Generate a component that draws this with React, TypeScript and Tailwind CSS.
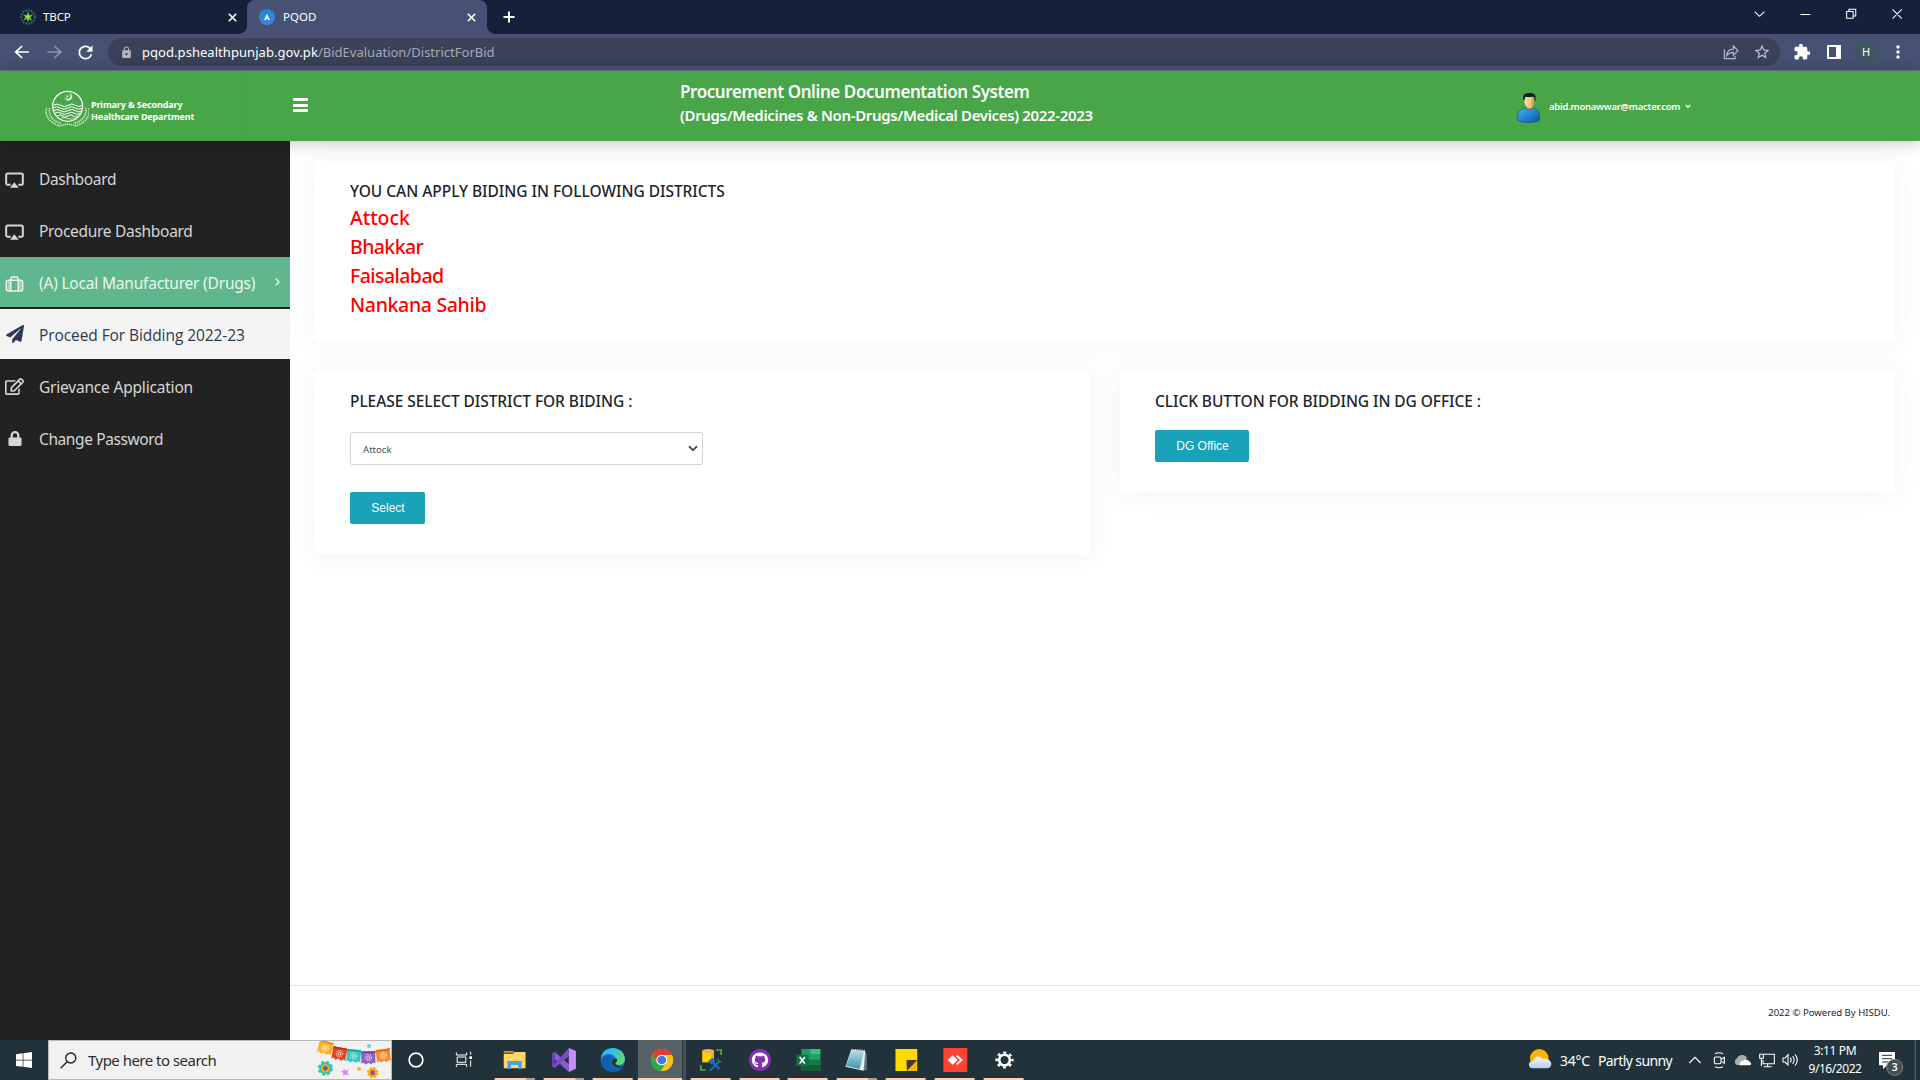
import React from "react";
import type { ReactNode } from "react";
import { FaLock, FaPaperPlane, FaRegEdit, FaGithub } from "react-icons/fa";
import { MdExtension, MdStarBorder, MdLock, MdRefresh } from "react-icons/md";

/* ---------- Browser ---------- */

function TabStrip() {
  return (
    <div className="flex h-[34px] bg-[#16203b] text-[11.5px] text-white">
      <div className="flex w-[247px] items-center pl-5 pr-[10px]">
        <svg className="h-4 w-4" viewBox="0 0 16 16">
          <circle cx="8" cy="8" r="6.8" fill="none" stroke="#3f7f5d" strokeWidth="1.8" strokeDasharray="1.6 1.3" />
          <path d="M8 2l1.3 4 4-.6-3 2.8 2.2 3.8-3.6-1.8L8 14l-1-4-3.600 1.500 2-3.500-2.600-2.600 4 .5z" fill="#55b83c" />
          <path d="M8 4l.8 3 2.500.5-2.300 1.200L8 12l-.8-3-2.700-1.200 2.700-.8z" fill="#b5d334" />
        </svg>
        <span className="ml-[7px] flex-1 tracking-[-0.1px]">TBCP</span>
        <CloseMark />
      </div>
      <div className="relative flex h-full w-[240px] items-center rounded-t-lg bg-[#465173] pl-3 pr-[11px]">
        <div className="absolute -left-2 bottom-0 h-2 w-2 bg-[radial-gradient(circle_at_0_0,#16203b_7.5px,#465173_8px)]" />
        <div className="absolute -right-2 bottom-0 h-2 w-2 bg-[radial-gradient(circle_at_100%_0,#16203b_7.5px,#465173_8px)]" />
        <svg className="h-4 w-4" viewBox="0 0 15 15">
          <defs>
            <linearGradient id="favicon" x1="0" y1="0" x2="0" y2="1">
              <stop offset="0" stopColor="#1a8bd8" />
              <stop offset="1" stopColor="#4a80dc" />
            </linearGradient>
          </defs>
          <circle cx="7.500" cy="7.500" r="7.500" fill="url(#favicon)" />
          <path d="M4.800 10.300L7.500 4.500l2.700 5.800H8.700L7.500 8.600l-1.200 1.700z" fill="#fff" />
        </svg>
        <span className="ml-2 flex-1">PQOD</span>
        <CloseMark />
      </div>
      <svg className="ml-4 mt-[11px] h-3 w-3" viewBox="0 0 12 12">
        <path d="M6 .5v11M.5 6h11" stroke="#fff" strokeWidth="2" />
      </svg>
      <svg className="ml-auto h-[34px] w-[178px]" viewBox="1050 0 518 102" preserveAspectRatio="none" fill="none" stroke="#fff" strokeWidth="3">
        <path d="M1087 35l14 14 14-14M1220 43.500h29M1354.500 34.500h19v20h-19zM1361 34v-6h20v20h-7M1488 28l27 28M1515 28l-27 28" />
      </svg>
    </div>
  );
}

function CloseMark() {
  return (
    <svg className="h-[9px] w-[9px]" viewBox="0 0 9 9">
      <path d="M.8.8l7.400 7.400M8.200.8L.8 8.200" stroke="#fff" strokeWidth="1.600" />
    </svg>
  );
}

function AddressBar() {
  return (
    <div className="flex h-[37px] items-center border-b border-[#6f7299] bg-[#465173] pr-[10px]">
      <svg className="h-9 w-[75px]" viewBox="0 102 210 108" preserveAspectRatio="none" fill="none" strokeWidth="5">
        <path d="M81 156H46M62 138l-18 18 18 18" stroke="#fff" />
        <path d="M133 156h35M152 138l18 18-18 18" stroke="#8d95ac" />
      </svg>
      <MdRefresh className="mr-3 h-[21px] w-[21px] text-white" />
      <div className="flex h-7 flex-1 items-center rounded-full bg-[#3a4158] pl-[12px] pr-[9px]">
        <MdLock className="h-[13px] w-[13px] text-[#b4b7c0]" />
        <span className="ml-[9px] pt-px text-[13px]">
          <span className="tracking-[0.05px] text-white">pqod.pshealthpunjab.gov.pk</span>
          <span className="tracking-[0.01px] text-[#a6aab7]">/BidEvaluation/DistrictForBid</span>
        </span>
        <svg className="ml-auto h-4 w-4" viewBox="994 132 48 48" fill="none" stroke="#babdc6" strokeWidth="3.500">
          <path d="M998 148v28h32v-8M1005 167c1-12 9-20 20-20v-9l14 14-14 14v-9c-9 0-15 3-20 10z" />
        </svg>
        <MdStarBorder className="ml-[14px] h-[18px] w-[18px] text-[#c0c3cc]" />
      </div>
      <MdExtension className="ml-[13px] h-[18px] w-[18px] text-white" />
      <svg className="ml-4 h-[14px] w-[14px]" viewBox="0 0 14 14">
        <path d="M0 0h14v14H0zM2 2v10h7V2z" fill="#fff" fillRule="evenodd" />
      </svg>
      <span className="ml-[14px] flex h-[22px] w-[22px] items-center justify-center rounded-full bg-[#41575f] text-[11px] text-white">H</span>
      <svg className="ml-[17px] h-4 w-4" viewBox="0 0 16 16" fill="#fff">
        <circle cx="4" cy="3" r="1.700" />
        <circle cx="4" cy="8" r="1.700" />
        <circle cx="4" cy="13" r="1.700" />
      </svg>
    </div>
  );
}

/* ---------- Site header ---------- */

function Emblem() {
  return (
    <svg className="h-[38px] w-[44px]" viewBox="44 30 132 114" fill="none" stroke="#fff">
      <g stroke="#cfe8ce" strokeWidth="5" strokeDasharray="4 2.500">
        <path d="M49 84c-6 18 4 42 36 52" />
        <path d="M58 84c-5 18 8 40 34 46" />
        <path d="M175 84c6 18-4 42-36 52" />
        <path d="M166 84c5 18-8 40-34 46" />
        <path d="M84 139c18-8 38-8 56 0" />
      </g>
      <circle cx="112" cy="79" r="45" fill="#48a648" strokeWidth="3.500" />
      <path d="M118 40a11 11 0 1 1-15 13 10 10 0 1 0 15-13z" fill="#fff" strokeWidth="1" />
      <path d="M110 44l2 3 3-1-2 3 2 3-4-1-2 2v-4l-3-1 3-1z" fill="#fff" stroke="none" />
      <path
        d="M69 76q11-8 22 0t22 0 22 0 20 0M68 84q11-8 22 0t22 0 22 0 22 0M71 92q10-8 20 0t22 0 22 0 19 0M74 100q10-7 19 0t20 0 20 0 16 0M81 108q8-7 16 0t16 0 16 0 13 0"
        strokeWidth="3"
      />
      <path d="M92 115q10-5 20 0t20 0" strokeWidth="2" />
    </svg>
  );
}

function Avatar() {
  return (
    <svg className="h-[32px] w-[23px]" viewBox="397 276 66 96" preserveAspectRatio="none">
      <defs>
        <linearGradient id="shirt" x1="0" y1="0" x2="1" y2="1">
          <stop offset="0" stopColor="#4fb3ea" />
          <stop offset=".6" stopColor="#1b7cd0" />
          <stop offset="1" stopColor="#0d5296" />
        </linearGradient>
        <linearGradient id="face" x1="0" y1="0" x2="1" y2="0">
          <stop offset="0" stopColor="#f8e2a0" />
          <stop offset=".6" stopColor="#e9c878" />
          <stop offset="1" stopColor="#a98443" />
        </linearGradient>
      </defs>
      <path d="M424 310h17v20l-8 6-9-6z" fill="#b88c48" />
      <path d="M399 361c-3-22 6-34 22-37 8 8 16 8 23 0 14 4 20 17 17 37-14 9-48 9-62 0z" fill="url(#shirt)" stroke="#1c4f6c" strokeWidth="2" />
      <path d="M417 292c4-8 28-8 32 0 1 16-5 33-16 33s-17-17-16-33z" fill="url(#face)" />
      <path d="M417 305c-6-20 0-26 17-26 15 0 19 8 15 27l-3-15c-8-2-18 2-25-1z" fill="#0c1722" />
    </svg>
  );
}

function SiteHeader() {
  return (
    <header className="relative z-10 flex h-[70px] bg-[#48a648] font-semibold text-white shadow-[0_1px_15px_rgba(0,0,0,0.25)]">
      <div className="flex w-[246px] items-start border-r-[5px] border-[#48a448] pl-[45px]">
        <div className="mt-[19px]">
          <Emblem />
        </div>
        <div className="ml-[2px] mt-[28px] whitespace-nowrap text-[9px] font-bold leading-3">
          <div className="tracking-[-0.12px]">Primary &amp; Secondary</div>
          <div className="tracking-[-0.16px]">Healthcare Department</div>
        </div>
      </div>
      <div className="ml-[47px] mt-[27px] flex h-[14px] w-[15px] flex-col justify-between">
        <i className="h-[3px] rounded-[1px] bg-white" />
        <i className="h-[3px] rounded-[1px] bg-white" />
        <i className="h-[3px] rounded-[1px] bg-white" />
      </div>
      <div className="ml-[372px] mt-[8px] w-[837px] whitespace-nowrap">
        <div className="text-[17px] leading-[26px] tracking-[-0.42px]">Procurement Online Documentation System</div>
        <div className="text-[15px] leading-[21px] tracking-[-0.34px]">(Drugs/Medicines &amp; Non-Drugs/Medical Devices) 2022-2023</div>
      </div>
      <div className="mt-[21px] flex h-8">
        <Avatar />
        <span className="ml-[9px] mt-[7px] text-[9.5px] leading-4 tracking-[-0.25px]">abid.monawwar@macter.com</span>
        <svg className="ml-[5px] mt-[12px] h-[5px] w-[6px]" viewBox="0 0 6 5">
          <path d="M.7 1l2.300 2.300L5.300 1" fill="none" stroke="#fff" strokeWidth="1.300" />
        </svg>
      </div>
    </header>
  );
}

/* ---------- Sidebar ---------- */

function AirplayIcon() {
  return (
    <svg className="h-4 w-[19px] translate-y-[1px]" viewBox="0 0 57 48">
      <path d="M17 38H8a4.500 4.500 0 0 1-4.500-4.500V9A4.500 4.500 0 0 1 8 4.500h41A4.500 4.500 0 0 1 53.500 9v24.500A4.500 4.500 0 0 1 49 38h-9" fill="none" stroke="currentColor" strokeWidth="6" />
      <path d="M28 31l13 16H15z" fill="currentColor" />
    </svg>
  );
}

function SuitcaseIcon() {
  return (
    <svg className="h-4 w-[19px] translate-y-[2px]" viewBox="0 0 57 48" fill="none" stroke="currentColor">
      <rect x="4" y="13" width="49" height="32" rx="6" strokeWidth="4.500" />
      <path d="M18 14V7a4 4 0 0 1 4-4h13a4 4 0 0 1 4 4v7M17 13v32M40 13v32" strokeWidth="4.500" />
      <path d="M11 15v28M46 15v28" strokeWidth="6" opacity=".55" />
    </svg>
  );
}

function MenuRow({ icon, children, className = "" }: { icon: ReactNode; children: ReactNode; className?: string }) {
  return (
    <div className={`flex h-[52px] items-center whitespace-nowrap pl-[5px] text-[15.5px] ${className}`}>
      <span className="-ml-[0.5px] flex w-5 justify-center">{icon}</span>
      <span className="ml-[14.5px] flex flex-1 items-center leading-6">{children}</span>
    </div>
  );
}

function Sidebar() {
  return (
    <nav className="w-[290px] shrink-0 bg-[#222222] pt-3 text-[#d6d6d6]">
      <MenuRow icon={<AirplayIcon />}>
        <span className="tracking-[-0.35px]">Dashboard</span>
      </MenuRow>
      <MenuRow icon={<AirplayIcon />}>
        <span className="tracking-[-0.3px]">Procedure Dashboard</span>
      </MenuRow>
      <MenuRow icon={<SuitcaseIcon />} className="border-b-2 border-[#222] bg-[#61b78c] text-[#e9f6ef]">
        <span className="relative top-px tracking-[-0.2px]">(A) Local Manufacturer (Drugs)</span>
        <svg className="ml-auto mr-[10px] h-2 w-[5px]" viewBox="0 0 5 8">
          <path d="M.8.800L4 4 .8 7.200" fill="none" stroke="currentColor" strokeWidth="1.400" />
        </svg>
      </MenuRow>
      <MenuRow icon={<FaPaperPlane className="h-[18px] w-[18px]" />} className="border-b-2 border-[#222] bg-[#f4f4f4] text-[#2d3a4f]">
        <span className="relative top-px font-['Open_Sans'] tracking-[-0.08px]">Proceed For Bidding 2022-23</span>
      </MenuRow>
      <MenuRow icon={<FaRegEdit className="h-[17px] w-[19px] -translate-y-px" />}>
        <span className="tracking-[-0.2px]">Grievance Application</span>
      </MenuRow>
      <MenuRow icon={<FaLock className="h-[15px] w-[14px] -translate-y-px" />}>
        <span className="tracking-[-0.4px]">Change Password</span>
      </MenuRow>
    </nav>
  );
}

/* ---------- Page content ---------- */

function Card({ children, className = "" }: { children: ReactNode; className?: string }) {
  return <section className={`rounded bg-white px-[35px] shadow-[0_0_28px_rgba(82,63,105,0.07)] ${className}`}>{children}</section>;
}

function Heading({ children }: { children: ReactNode }) {
  return <h2 className="whitespace-nowrap text-[15.5px] font-medium leading-5 text-[#212529]">{children}</h2>;
}

function TealButton({ children, className }: { children: ReactNode; className: string }) {
  return (
    <button className={`flex h-8 items-center justify-center rounded-[2px] bg-[#19a2b8] font-['Liberation_Sans'] text-[12px] text-white ${className}`}>
      {children}
    </button>
  );
}

function Content() {
  return (
    <main className="flex flex-1 flex-col bg-white">
      <div className="flex-1 px-[25px] pt-5">
        <Card className="h-[180px] pt-5">
          <Heading>
            <span className="tracking-[-0.03px]">YOU CAN APPLY BIDING IN FOLLOWING DISTRICTS</span>
          </Heading>
          <div className="mt-[2px] text-[19.5px] font-medium leading-[29px] text-[#ff0000]">
            <div className="tracking-[-0.05px]">Attock</div>
            <div className="tracking-[-0.6px]">Bhakkar</div>
            <div className="tracking-[-0.56px]">Faisalabad</div>
            <div className="tracking-[-0.33px]">Nankana Sahib</div>
          </div>
        </Card>
        <div className="mt-[30px] grid grid-cols-2 items-start gap-[30px]">
          <Card className="h-[183px] pt-5">
            <Heading>
              <span className="tracking-[-0.06px]">PLEASE SELECT DISTRICT FOR BIDING :</span>
            </Heading>
            <div className="mt-[21px] flex h-[33px] w-[353px] items-center justify-between rounded-[2px] border border-[#ced4da] pl-3 pr-1 text-[9.6px] text-[#495057]">
              <span className="relative top-[2px]">Attock</span>
              <svg className="h-[7px] w-[10px]" viewBox="0 0 10 7">
                <path d="M1 1.300l4 3.900 4-3.900" fill="none" stroke="#495057" strokeWidth="1.900" />
              </svg>
            </div>
            <TealButton className="mt-[27px] w-[75px] pl-px">Select</TealButton>
          </Card>
          <Card className="h-[121px] pt-5">
            <Heading>
              <span className="tracking-[-0.07px]">CLICK BUTTON FOR BIDDING IN DG OFFICE :</span>
            </Heading>
            <TealButton className="mt-[19px] w-[94px] pl-px">DG Office</TealButton>
          </Card>
        </div>
      </div>
      <footer className="flex h-[55px] items-center justify-end border-t border-[#e6e6e8] pr-[30px] text-[9.6px] tracking-[-0.03px] text-[#212529]">
        2022 © Powered By HISDU.
      </footer>
    </main>
  );
}

/* ---------- Taskbar ---------- */

function Bunting() {
  const flags: [number, number, string, string, number][] = [
    [976, 53, "#ffb31a", "#f08c00", 15],
    [1018, 71, "#e4441f", "#c42c10", 10],
    [1061, 78, "#2fc9bd", "#1aa79e", 5],
    [1105, 83, "#8d5fc4", "#6f43a8", -1],
    [1150, 77, "#ff8a1f", "#ea6a00", -7],
  ];
  return (
    <svg className="h-[38px] w-[74px]" viewBox="951 33 222 114">
      <path d="M957 38q100 55 213 17" fill="none" stroke="#555" strokeWidth="2" />
      {flags.map(([x, y, c, d, r]) => (
        <g key={x} transform={`translate(${x} ${y}) rotate(${r})`}>
          <path d="M-21-19h42v37l-6-3-7 5-8-5-8 5-7-5-6 3z" fill={c} />
          <path d="M-21-19h42v5h-42z" fill={d} />
          <circle r="9.500" fill="none" stroke="#fff" strokeWidth="3" strokeDasharray="3 2.500" opacity=".8" />
          <circle r="4.500" fill="none" stroke="#fff" strokeWidth="2.500" opacity=".85" />
        </g>
      ))}
      <circle cx="976" cy="115" r="19" fill="none" stroke="#2cc4b8" strokeWidth="7" strokeDasharray="9 5.900" />
      <circle cx="976" cy="115" r="18" fill="#2cc4b8" />
      <circle cx="976" cy="115" r="12.500" fill="#ffb000" />
      <circle cx="976" cy="115" r="7" fill="#7a50b8" />
      <circle cx="1118" cy="128" r="14" fill="none" stroke="#ffab00" strokeWidth="6" strokeDasharray="7 4" />
      <circle cx="1118" cy="128" r="13" fill="#ffab00" />
      <circle cx="1118" cy="128" r="7" fill="#7a50b8" />
      <path d="M1030 115l6 7 11-4-5 9 5 10-9-5-8 6 0-10-7-5 9-1z" fill="#e07cf5" />
      <circle cx="1077" cy="117" r="6" fill="#ffb31a" />
      <circle cx="1107" cy="48" r="6" fill="#66d4e4" />
    </svg>
  );
}

const appIcons: ReactNode[] = [
  <g key="explorer">
    <path d="M67 63h26l5 5h-31z" fill="#e09f00" />
    <path d="M67 71h26l5-5h30v49H67z" fill="#ffd767" />
    <path d="M78 117V93h39v24h-9v-13H87v13z" fill="#3f9fe8" />
    <path d="M78 104V93h39v11z" fill="#42a5ee" />
  </g>,
  <g key="visual-studio">
    <path d="M202 71l8-5 39 37v23L203 81z" fill="#8a5cd0" />
    <path d="M202 71l8-4v46l-8-4z" fill="#6a3fae" />
    <path d="M202 109l47-54v24l-39 35z" fill="#7a4cc0" />
    <path d="M249 54l20 9v53l-20 10z" fill="#c48cf8" />
  </g>,
  <g key="edge">
    <circle cx="372" cy="90" r="34" fill="#1773cf" />
    <path d="M339 84c2-19 16-30 33-30 21 0 34 16 34 33 0 12-10 19-20 18-8 0-11-4-8-8 9-15-6-27-20-25-8 1-15 5-19 12z" fill="url(#edge-top)" />
    <path d="M356 76c-10 2-17 10-17 22 3 16 16 28 35 28 12 0 22-6 27-13-10 4-24 5-32-5-7-8-4-17 4-21-2-7-9-12-17-11z" fill="#1160b0" />
    <path d="M384 87c-4-3-11-1-14 4-4 8 1 17 10 21 8 3 15 2 20-1l-17-7c-5-3-3-6-1-8 2-3 3-6 2-9z" fill="#26373e" />
  </g>,
  <g key="chrome">
    <ellipse cx="509.500" cy="90" rx="31" ry="33" fill="#fbc116" />
    <path d="M482 75a31 33 0 0 1 55 0l-27 2-13 20z" fill="#e33b2e" />
    <path d="M482 74.500a31 33 0 0 0 24 48.500l15-24-25 0z" fill="#2da94f" />
    <path d="M509 75h28a31 33 0 0 1-31 48l16-25z" fill="#fbc116" />
    <circle cx="509" cy="90" r="15.500" fill="#fff" />
    <circle cx="509" cy="90" r="12.500" fill="#3a7cec" />
  </g>,
  <g key="database">
    <path d="M622 62h33v35h-33z" fill="#ffd400" />
    <path d="M647 62h8v35h-8z" fill="#f0b400" />
    <ellipse cx="638.500" cy="63" rx="16.500" ry="6" fill="#f3ad62" />
    <path d="M661 60h14v15M618 106v14h14" fill="none" stroke="#4fa64a" strokeWidth="5" />
    <path d="M646 91l24 26M672 92l-25 26" stroke="#1b6fb5" strokeWidth="6" />
    <path d="M640 95l10-9 7 6-9 9zM665 86l3 9 8 2M641 121l6-1 1-5" stroke="#1b6fb5" strokeWidth="4" fill="#1b6fb5" />
  </g>,
  <g key="github">
    <ellipse cx="783.500" cy="90" rx="31" ry="33" fill="#8330ad" />
    <FaGithub x={760} y={66.5} size={47} color="#fff" />
  </g>,
  <g key="excel">
    <path d="M902 57h53v64h-53z" fill="#1e9e62" />
    <path d="M928 57h27v15h-27z" fill="#33c481" />
    <path d="M928 72h27v17h-27z" fill="#21a366" />
    <path d="M928 89h27v16h-27z" fill="#107c41" />
    <path d="M902 105h53v17h-53z" fill="#185c37" />
    <path d="M902 89h26v16h-26z" fill="#167548" />
    <path d="M888 74h34v34h-34z" fill="#0f7240" />
    <path d="M897 81l15 20M912 81l-15 20" stroke="#fff" strokeWidth="4.500" />
  </g>,
  <g key="notepad">
    <path d="M1076 64l9 8v49l-12 1z" fill="#5f7d88" />
    <path d="M1041 60l40 3-5 59-51-12z" fill="#e9f0f2" />
    <path d="M1042 61l35 3-12 53-38-9z" fill="url(#notepad-page)" />
    <path d="M1042 59l37 3" stroke="#dfe6e8" strokeWidth="5" strokeDasharray="3 2" />
  </g>,
  <g key="sticky-notes">
    <path d="M1165 57h61v35l-29 31h-32z" fill="#ffda00" />
    <path d="M1226 91v32h-30z" fill="#f7b900" />
    <path d="M1196 90h30l-29 32z" fill="#3e3a35" />
  </g>,
  <g key="anydesk">
    <path d="M1299 54h67v72h-67z" fill="#ff4234" />
    <path d="M1325 76l14 14-14 14-14-14z" fill="#fff" />
    <path d="M1336 77l14 13-14 13" fill="none" stroke="#fff" strokeWidth="5.500" />
  </g>,
  <g key="settings" fill="none" stroke="#fff">
    <ellipse cx="1470" cy="90" rx="15" ry="16" strokeWidth="7.500" />
    <circle cx="1470" cy="90" r="22" strokeWidth="7" strokeDasharray="8 9.280" strokeDashoffset="4" />
  </g>,
];

function RunningApps() {
  return (
    <div className="ml-[18px] flex w-[538px]">
      {appIcons.map((icon, i) => (
        <svg key={i} className="h-10 min-w-0 flex-1" viewBox={`${28.5 + 137 * i} 30 137 120`} preserveAspectRatio="none">
          <defs>
            <linearGradient id="edge-top" x1="0" x2="1" y1="0" y2=".6">
              <stop offset="0" stopColor="#2fb4ee" />
              <stop offset=".5" stopColor="#35c1e0" />
              <stop offset="1" stopColor="#62dc6a" />
            </linearGradient>
            <linearGradient id="notepad-page" x1="0" x2="0" y1="0" y2="1">
              <stop offset="0" stopColor="#b9dde8" />
              <stop offset="1" stopColor="#3c93ad" />
            </linearGradient>
          </defs>
          {i === 3 && <path d="M442 30H566v120H442z" fill="#556164" />}
          {i === 3 && <path d="M568 30h9v120h-9z" fill="#454f53" />}
          {icon}
          <path d={i === 3 ? "M442 144h124v6H442z" : `M${41.5 + 137 * i} 144h112v6h-112z`} fill="#fcceb4" />
          {(i === 0 || i === 1 || i === 7) && <path d={`M${130 + 137 * i} 144h23v6h-23z`} fill="#b09a8e" />}
        </svg>
      ))}
    </div>
  );
}

function TrayIcons() {
  return (
    <svg className="h-10 w-[120px]" viewBox="555 210 360 120" fill="none" stroke="#fff" strokeWidth="3.200">
      <path d="M568 279l17-17 17 17" />
      <rect x="643" y="261" width="20" height="20" rx="4" />
      <path d="M664 268l9-6v18l-9-6M645 251q12-6 24 0M645 290q12 6 24 0" />
      <path d="M711 285a11 11 0 0 1 0-20c4-12 24-14 30-2l-20 22z" fill="#a8adb0" stroke="none" />
      <path d="M720 286c-4-8 4-15 10-13 6-8 17-4 18 2 8 2 6 11 0 11z" fill="#fff" stroke="none" />
      <path d="M791 253h32v28h-34v-11M779 253h11v12h-11zM784 265v23M803 281v9M791 290h24" />
      <path d="M849 264h6l9-10v31l-9-9h-6zM871 263q5 7 0 14M878 258q9 12 0 24M885 253q14 17 0 34" />
    </svg>
  );
}

function Taskbar() {
  return (
    <div className="flex h-10 bg-[#22323a] text-white">
      <div className="flex w-12 items-center pl-4">
        <svg className="h-4 w-4" viewBox="0 0 16 16" fill="#fff">
          <path d="M0 2.200l6.700-.9v6.400H0zM7.400 1.200L16 0v7.700H7.400zM0 8.400h6.700v6.400L0 13.900zM7.400 8.400H16V16l-8.600-1.200z" />
        </svg>
      </div>
      <div className="flex h-10 w-[344px] items-center border border-[#b9b9b9] bg-[#f1f1f1] pl-[11px]">
        <svg className="h-[17px] w-[17px]" viewBox="0 0 17 17" fill="none" stroke="#1d1d1d" strokeWidth="1.300">
          <circle cx="10.800" cy="6" r="5" />
          <path d="M7.200 9.800L.6 16.300" />
        </svg>
        <span className="ml-[11px] text-[15px] tracking-[-0.52px] text-[#2d2d2d]">Type here to search</span>
        <div className="ml-auto">
          <Bunting />
        </div>
      </div>
      <svg className="h-10 w-20" viewBox="1176 30 240 120" fill="none" stroke="#fff">
        <circle cx="1248" cy="90" r="20.500" strokeWidth="5" />
        <path d="M1369 67v8h31v-8M1369 111v-8h31v8M1371.500 81h26v16h-26zM1412 65v9M1412 91v19" strokeWidth="3" />
        <path d="M1408 79h8v8h-8z" fill="#fff" stroke="none" />
      </svg>
      <RunningApps />
      <div className="ml-auto flex h-full items-center">
        <svg className="h-6 w-6" viewBox="84 236 72 72">
          <defs>
            <linearGradient id="cloud" x1="0" x2="0" y1="0" y2="1">
              <stop offset="0" stopColor="#f3f7fd" />
              <stop offset="1" stopColor="#b8cdf0" />
            </linearGradient>
          </defs>
          <circle cx="118" cy="267" r="28" fill="#ffb300" />
          <path d="M98 297c-16-1-14-22 0-22 4-14 20-19 31-6 14-4 25 6 25 15 0 8-6 13-13 13z" fill="url(#cloud)" />
        </svg>
        <span className="ml-2 pt-px text-[14px] tracking-[-0.2px]">34°C</span>
        <span className="ml-2 w-[75px] whitespace-nowrap pt-px text-[14px] tracking-[-0.6px]">Partly sunny</span>
        <div className="ml-[12px]">
          <TrayIcons />
        </div>
        <div className="ml-[2px] w-[56px] text-center text-[12px] leading-[18px]">
          <div className="tracking-[-0.35px]">3:11 PM</div>
          <div className="tracking-[-0.45px]">9/16/2022</div>
        </div>
        <svg className="ml-3 h-10 w-[45px]" viewBox="1125 210 135 120">
          <path d="M1137 246h48v40h-24l-12 11v-11h-12z" fill="#fff" />
          <path d="M1146 256h30M1146 266h30M1146 276h20" stroke="#22323a" strokeWidth="3" />
          <circle cx="1184" cy="292" r="24" fill="#454d50" stroke="#8b9193" strokeWidth="2.500" />
          <text x="1184" y="303" textAnchor="middle" fill="#fff" fontSize="31" fontWeight="600">3</text>
          <path d="M1246 210v120" stroke="#6d787d" strokeWidth="2.500" />
        </svg>
      </div>
    </div>
  );
}

export default function App() {
  return (
    <div className="flex h-[1080px] w-[1920px] flex-col overflow-hidden bg-white font-['Noto_Sans','Open_Sans',sans-serif]">
      <TabStrip />
      <AddressBar />
      <SiteHeader />
      <div className="flex flex-1">
        <Sidebar />
        <Content />
      </div>
      <Taskbar />
    </div>
  );
}
